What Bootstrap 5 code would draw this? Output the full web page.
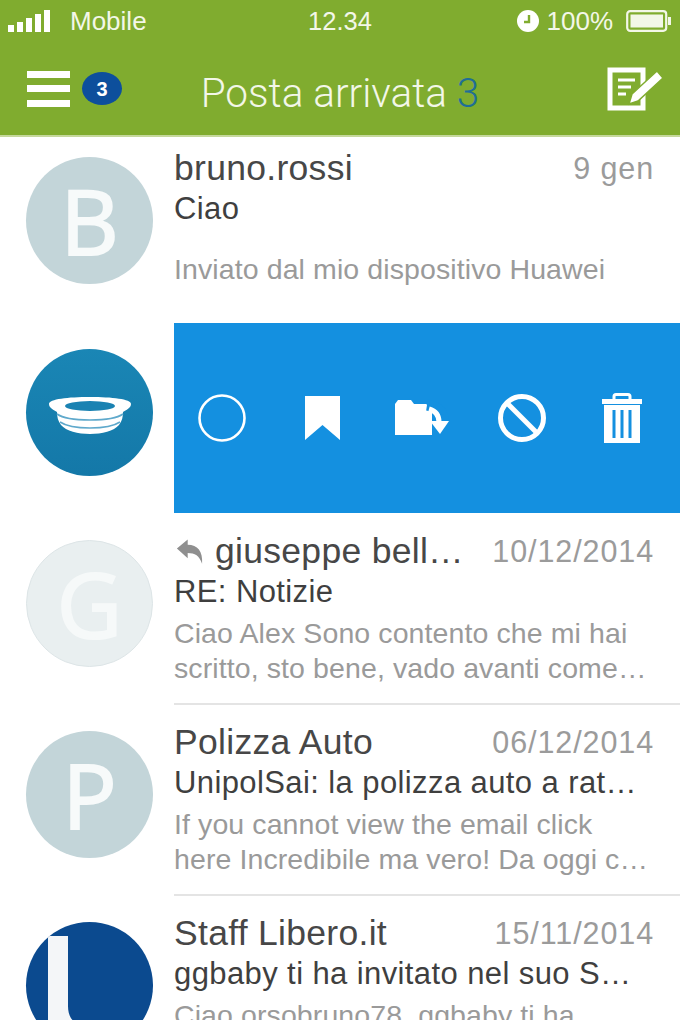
<!DOCTYPE html>
<html>
<head>
    <title>Posta arrivata</title>
    <link href="https://cdn.jsdelivr.net/npm/bootstrap@5.3.0/dist/css/bootstrap.min.css" rel="stylesheet">
    <style>
        html, body { height: 1020px; overflow: hidden; }
        body { background: #fff; font-family: "Liberation Sans", Arial, sans-serif; color: #4a4a4a; }
        .app-head { height: 137px; background: #80ac2f; color: #f3f7e8; border-bottom: 2px solid #c5d89c; }
        .status-bar { height: 42px; font-size: 26px; padding: 0 8px; }
        .mobile-label { margin-left: 20px; }
        .clock { font-size: 25.5px; }
        .pct-label { margin: 0 13px 0 8px; }
        .title-bar { height: 93px; padding: 0 17px 0 27px; }
        .menu-badge { width: 40px; height: 33px; border-radius: 50%; background: #0d4f9c; color: #fff; font-size: 20px; font-weight: 700; margin-left: 11px; }
        .page-title { left: 0; right: 0; top: 0; bottom: 0; padding-top: 10px; font-family: Roboto, sans-serif; font-weight: 300; font-size: 40.5px; pointer-events: none; }
        .page-title span { color: #1f6e96; }
        .msg-row { height: 191px; padding-top: 26px; }
        .msg-row.first { height: 186px; padding-top: 20px; }
        .avatar { width: 127px; height: 127px; border-radius: 50%; margin: 0 21px 0 26px; flex: none; font-family: "Open Sans", sans-serif; font-size: 90px; font-weight: 400; -webkit-text-stroke: 2px currentColor; color: #f7fafa; overflow: hidden; }
        .av-b { background: #c3d5d9; }
        .av-g { background: #e9eff0; border: 1px solid #dde5e7; color: #f6f9f9; }
        .av-ring { background: linear-gradient(#1a86b5, #1478a8); }
        .av-ring svg { margin-top: 6px; }
        .av-l { background: #0b4a8f; }
        .msg-body { flex: 1; min-width: 0; padding-right: 26px; margin-top: -8px; }
        .msg-body.tight { margin-top: -26px; padding-top: 18px; }
        .msg-line { border-bottom: 2px solid #e4e4e4; height: 191px; }
        .msg-top { height: 40px; }
        .sender { font-size: 35.5px; letter-spacing: .3px; color: #474747; }
        .reply-mark { flex: none; margin: 0 12px 0 2px; }
        .msg-date { font-size: 30.5px; letter-spacing: .9px; color: #9b9b9b; flex: none; margin-left: 26px; }
        .subject { font-size: 31px; letter-spacing: .4px; color: #3f3f3f; height: 40px; line-height: 40px; }
        .preview { font-size: 28.5px; letter-spacing: .1px; color: #9a9a9a; line-height: 35px; margin-top: 4px; white-space: nowrap; }
        .preview.gap { margin-top: 23px; }
        .one-line { white-space: nowrap; overflow: hidden; text-overflow: ellipsis; }
        .action-panel { margin-top: -26px; height: 190px; background: #1490e0; flex: 1; gap: 4px; }
        .action-panel svg { display: block; }
        .action-cell { width: 96px; }
    </style>
</head>
<body>
    <div class="app-head">
        <div class="status-bar d-flex align-items-center position-relative">
            <svg width="42" height="22" viewBox="0 0 42 22" fill="#fff"><rect x="0" y="15" width="6" height="7"/><rect x="9" y="12" width="6" height="10"/><rect x="18" y="8" width="6" height="14"/><rect x="27" y="4" width="6" height="18"/><rect x="36" y="0" width="6" height="22"/></svg>
            <span class="mobile-label">Mobile</span>
            <span class="clock position-absolute top-50 start-50 translate-middle">12.34</span>
            <div class="ms-auto d-flex align-items-center">
                <svg width="22" height="22" viewBox="0 0 22 22"><circle cx="11" cy="11" r="11" fill="#fff"/><path d="M12 5v7H7" fill="none" stroke="#80ac2f" stroke-width="2.4"/></svg>
                <span class="pct-label">100%</span>
                <svg width="46" height="22" viewBox="0 0 46 22"><rect x="1.2" y="1.2" width="39" height="19.6" rx="3" fill="none" stroke="#f3f7e8" stroke-width="2.2"/><rect x="4.5" y="4.5" width="32.5" height="13" fill="#f3f7e8"/><rect x="42" y="7" width="3" height="8" fill="#f3f7e8"/></svg>
            </div>
        </div>
        <div class="title-bar d-flex align-items-center position-relative">
            <svg width="44" height="36" viewBox="0 0 44 36" fill="#fff"><rect y="0" width="43" height="7"/><rect y="14" width="43" height="7"/><rect y="29" width="43" height="7"/></svg>
            <div class="menu-badge d-flex align-items-center justify-content-center">3</div>
            <div class="page-title position-absolute d-flex align-items-center justify-content-center">Posta arrivata&nbsp;<span>3</span></div>
            <svg class="ms-auto" width="56" height="44" viewBox="0 0 56 44">
                <path d="M3 3H36V41H3Z" fill="none" stroke="#fff" stroke-width="5"/>
                <path d="M11 13H28M11 20H24M11 27H19" stroke="#fff" stroke-width="3"/>
                <path d="M25 27L50 4 56 11 31 34 22 37Z" fill="#fff" stroke="#80ac2f" stroke-width="1.5"/>
            </svg>
        </div>
    </div>

    <div class="msg-row first d-flex">
        <div class="avatar av-b d-flex align-items-center justify-content-center">B</div>
        <div class="msg-body">
            <div class="msg-top d-flex justify-content-between align-items-center">
                <div class="sender one-line">bruno.rossi</div>
                <div class="msg-date">9 gen</div>
            </div>
            <div class="subject one-line">Ciao</div>
            <div class="preview gap">Inviato dal mio dispositivo Huawei</div>
        </div>
    </div>

    <div class="msg-row d-flex">
        <div class="avatar av-ring d-flex align-items-center justify-content-center">
            <svg width="84" height="38" viewBox="0 0 84 38">
                <path d="M1 7C1 2 20 0 42 0C64 0 83 2 83 7C83 11 78 13 75 15C75 20 74 24 71 28C66 34 54 37 42 37C30 37 18 34 13 28C10 24 9 20 9 15C6 13 1 11 1 7Z" fill="#fff"/>
                <ellipse cx="42" cy="9" rx="25" ry="5" fill="#1a82b2"/>
                <path d="M9 17C20 25 64 25 75 17M12 25C24 33 60 33 72 25" fill="none" stroke="#5fa9cc" stroke-width="1.6"/>
            </svg>
        </div>
        <div class="action-panel d-flex align-items-center">
            <div class="action-cell d-flex justify-content-center">
                <svg width="48" height="48" viewBox="0 0 48 48"><circle cx="24" cy="24" r="22.5" fill="none" stroke="#fff" stroke-width="2.6"/></svg>
            </div>
            <div class="action-cell d-flex justify-content-center">
                <svg width="35" height="44" viewBox="0 0 35 44"><path d="M0 0H35V44L17.5 29 0 44Z" fill="#fff"/></svg>
            </div>
            <div class="action-cell d-flex justify-content-center">
                <svg width="56" height="38" viewBox="0 0 56 38" fill="#fff">
                    <path d="M1 5L4 1H17L20 5H32L38 9V36H1Z"/>
                    <path d="M33 6C46 8 50 15 49 24" fill="none" stroke="#1490e0" stroke-width="11"/>
                    <path d="M35 10C42 12 45 17 45 23" fill="none" stroke="#fff" stroke-width="5"/>
                    <path d="M36 22H55L46 35Z"/>
                </svg>
            </div>
            <div class="action-cell d-flex justify-content-center">
                <svg width="48" height="48" viewBox="0 0 48 48" fill="none" stroke="#fff"><circle cx="24" cy="24" r="21.5" stroke-width="5"/><path d="M9 9L39 39" stroke-width="5"/></svg>
            </div>
            <div class="action-cell d-flex justify-content-center">
                <svg width="40" height="50" viewBox="0 0 40 50">
                    <path d="M12 7V3.5C12 2 13 1.5 14 1.5H26C27 1.5 28 2 28 3.5V7" fill="none" stroke="#fff" stroke-width="3"/>
                    <rect x="0" y="6" width="40" height="5" fill="#fff"/>
                    <path d="M2 12H38V50H2Z" fill="#fff"/>
                    <path d="M12 17V45M20 17V45M28 17V45" stroke="#1490e0" stroke-width="3"/>
                </svg>
            </div>
        </div>
    </div>

    <div class="msg-row d-flex">
        <div class="avatar av-g d-flex align-items-center justify-content-center">G</div>
        <div class="msg-body tight msg-line">
            <div class="msg-top d-flex justify-content-between align-items-center">
                <svg class="reply-mark" width="27" height="28" viewBox="0 0 30 28"><path d="M1 10L13 0V6C24 6 30 13 29 27 26 18 21 15 13 15V21Z" fill="#8f8f8f"/></svg>
                <div class="sender one-line flex-grow-1">giuseppe bell…</div>
                <div class="msg-date">10/12/2014</div>
            </div>
            <div class="subject one-line">RE: Notizie</div>
            <div class="preview">Ciao Alex Sono contento che mi hai<br>scritto, sto bene, vado avanti come…</div>
        </div>
    </div>

    <div class="msg-row d-flex">
        <div class="avatar av-b d-flex align-items-center justify-content-center">P</div>
        <div class="msg-body tight msg-line">
            <div class="msg-top d-flex justify-content-between align-items-center">
                <div class="sender one-line">Polizza Auto</div>
                <div class="msg-date">06/12/2014</div>
            </div>
            <div class="subject one-line">UnipolSai: la polizza auto a rat…</div>
            <div class="preview">If you cannot view the email click<br>here Incredibile ma vero! Da oggi c…</div>
        </div>
    </div>

    <div class="msg-row d-flex">
        <div class="avatar av-l">
            <svg width="127" height="127" viewBox="0 0 127 127"><path d="M22 0H42V70C42 82 48 88 56 88H92V127H60C36 127 22 112 22 90Z" fill="#f4f6f8"/></svg>
        </div>
        <div class="msg-body tight">
            <div class="msg-top d-flex justify-content-between align-items-center">
                <div class="sender one-line">Staff Libero.it</div>
                <div class="msg-date">15/11/2014</div>
            </div>
            <div class="subject one-line">ggbaby ti ha invitato nel suo S…</div>
            <div class="preview">Ciao orsobruno78, ggbaby ti ha</div>
        </div>
    </div>
    <script src="https://cdn.jsdelivr.net/npm/bootstrap@5.3.0/dist/js/bootstrap.bundle.min.js"></script>
</body>
</html>
